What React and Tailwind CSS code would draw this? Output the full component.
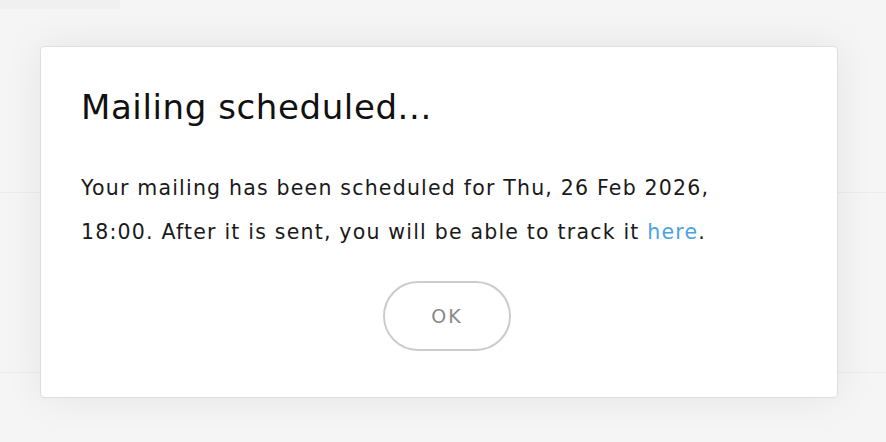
import React from "react";

const App = () => {
  return (
    <div className="relative w-[886px] h-[442px] overflow-hidden bg-[#f5f5f5] font-['DejaVu_Sans','Open_Sans',sans-serif]">
      {/* page behind the dialog */}
      <div className="flex flex-col">
        <div className="w-[120px] h-[9px] bg-[#f0f0f0]" />
        <div className="h-[183px]" />
        <div className="h-px bg-[#e6ecf0]" />
        <div className="h-[179px]" />
        <div className="h-px bg-[#ececec]" />
      </div>

      {/* dialog */}
      <div className="absolute inset-0 pt-[46px] px-[40px] pr-[48px]">
        <div className="bg-white border border-[#dedede] rounded-[4px] shadow-[0_0_40px_rgba(0,0,0,0.07)] h-[352px] pl-[40px] pr-[24px] pt-[38px]">
          <h2 className="text-[34px] leading-[44px] text-[#111] font-normal tracking-[0.6px]">
            Mailing scheduled...
          </h2>
          <p className="mt-[37px] text-[20.5px] leading-[44px] text-[#1a1a1a] tracking-[1.2px]">
            Your mailing has been scheduled for Thu, 26 Feb 2026,
            <br />
            18:00. After it is sent, you will be able to track it{" "}
            <a href="#" className="text-[#4aa3e0]">here</a>.
          </p>
          <div className="flex justify-center mt-[27px]">
            <button className="w-[128px] h-[70px] rounded-full border-2 border-[#cccccc] text-[#888] text-[19px] tracking-[2px]">
              OK
            </button>
          </div>
        </div>
      </div>
    </div>
  );
};

export default App;
